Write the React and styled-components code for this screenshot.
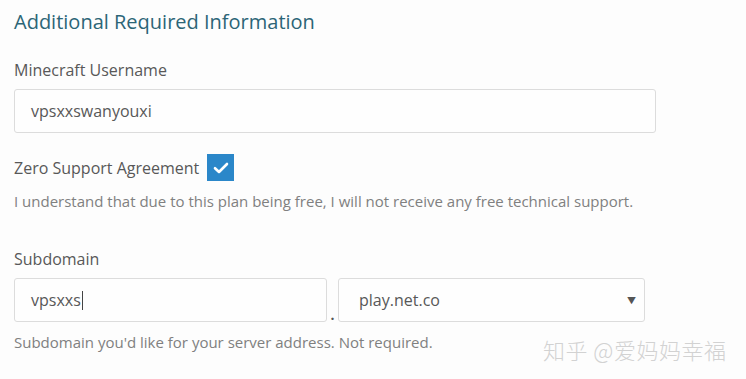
import React from 'react'
import styled, { createGlobalStyle } from 'styled-components'

const GlobalStyle = createGlobalStyle`
    html, body {
        margin: 0;
        padding: 0;
        background: #fdfdfd;
    }
    body {
        font-family: "Open Sans", "Noto Sans", "Noto Sans CJK SC", sans-serif;
        color: #555;
    }
`

function App() {
    return (
        <Page>
            <GlobalStyle />
            <Heading>Additional Required Information</Heading>

            <Group>
                <Label>Minecraft Username</Label>
                <Field>vpsxxswanyouxi</Field>
            </Group>

            <CheckRow>
                <Label as="span">Zero Support Agreement</Label>
                <Checkbox>
                    <svg width="16" height="12" viewBox="0 0 16 12">
                        <path d="M2 6.2l4 3.8 8-8" fill="none" stroke="#fff" strokeWidth="2.6" strokeLinecap="round" strokeLinejoin="round" />
                    </svg>
                </Checkbox>
            </CheckRow>
            <Help>I understand that due to this plan being free, I will not receive any free technical support.</Help>

            <Group $top={37}>
                <Label>Subdomain</Label>
                <SplitRow>
                    <Field $width={313}>vpsxxs<Caret /></Field>
                    <Dot>.</Dot>
                    <Field $width={307} $pad={20}>
                        play.net.co
                        <Arrow>▼</Arrow>
                    </Field>
                </SplitRow>
            </Group>
            <Help>Subdomain you'd like for your server address. Not required.</Help>

            <Watermark>知乎 @爱妈妈幸福</Watermark>
        </Page>
    )
}

export default App

const Page = styled.div`
    position: relative;
    width: 746px;
    height: 379px;
    padding: 8px 14px 0;
    box-sizing: border-box;
    overflow: hidden;
`

const Heading = styled.h3`
    margin: 0;
    font-size: 20px;
    line-height: 28px;
    font-weight: 400;
    color: #2c6577;
`

const Group = styled.div`
    display: flex;
    flex-direction: column;
    gap: 8px;
    margin-top: ${p => p.$top || 23}px;
`

const Label = styled.label`
    font-size: 16px;
    line-height: 22px;
    color: #585858;
`

const Field = styled.div`
    position: relative;
    display: flex;
    align-items: center;
    box-sizing: border-box;
    width: ${p => p.$width || 642}px;
    height: 44px;
    padding: 0 8px 0 ${p => p.$pad || 16}px;
    border: 1px solid #dcdcdc;
    border-radius: 3px;
    background: #fefefe;
    font-size: 16px;
    color: #585858;
`

const Caret = styled.span`
    display: inline-block;
    width: 1px;
    height: 19px;
    margin-left: 1px;
    background: #444;
`

const Arrow = styled.span`
    margin-left: auto;
    font-size: 9px;
    color: #555;
`

const CheckRow = styled.div`
    display: flex;
    align-items: center;
    gap: 8px;
    margin-top: 21px;
`

const Checkbox = styled.span`
    display: flex;
    align-items: center;
    justify-content: center;
    width: 27px;
    height: 27px;
    background: #2b87c9;
`

const Help = styled.p`
    margin: 10px 0 0;
    font-size: 15px;
    line-height: 20px;
    color: #808080;
`

const SplitRow = styled.div`
    display: flex;
    align-items: flex-end;
`

const Dot = styled.span`
    width: 11px;
    text-align: center;
    font-size: 14px;
    line-height: 14px;
    color: #555;
    font-weight: 700;
`

const Watermark = styled.div`
    position: absolute;
    left: 543px;
    top: 333px;
    font-family: "Noto Sans CJK SC", sans-serif;
    font-size: 22px;
    font-weight: 300;
    letter-spacing: 0.5px;
    color: #d2d2d2;
`
